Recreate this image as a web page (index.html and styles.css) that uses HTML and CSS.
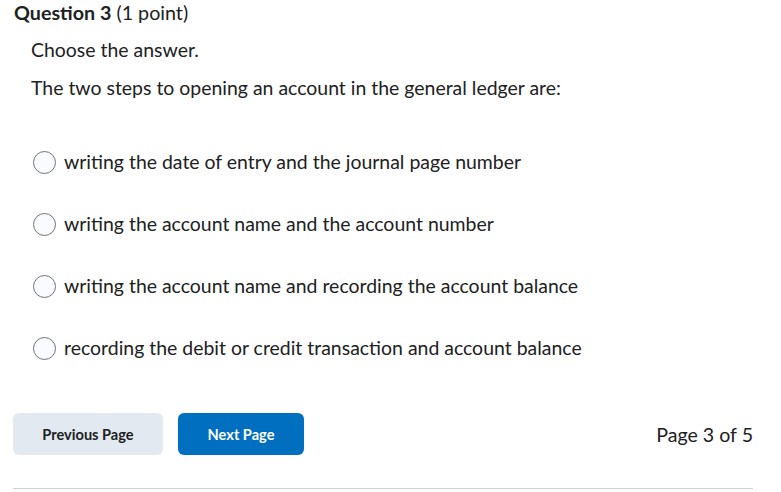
FILE: index.html
```html
<!DOCTYPE html>
<html>
<head>
<title>Question 3</title>
<link rel="stylesheet" href="styles.css">
</head>
<body>
<div class="quiz">
	<h2 class="qtitle"><b>Question 3</b> (1 point)</h2>
	<div class="qbody">
		<p class="instr">Choose the answer.</p>
		<p class="stem">The two steps to opening an account in the general ledger are:</p>
		<form class="choices">
			<label class="choice"><input type="radio" name="q3"/><span>writing the date of entry and the journal page number</span></label>
			<label class="choice"><input type="radio" name="q3"/><span>writing the account name and the account number</span></label>
			<label class="choice"><input type="radio" name="q3"/><span>writing the account name and recording the account balance</span></label>
			<label class="choice"><input type="radio" name="q3"/><span>recording the debit or credit transaction and account balance</span></label>
		</form>
	</div>
	<div class="nav">
		<button class="btn prev">Previous Page</button>
		<button class="btn next">Next Page</button>
		<div class="pageno">Page 3 of 5</div>
	</div>
	<div class="rule"></div>
</div>
</body>
</html>
```
FILE: styles.css
```css
html,body{
	margin:0;
	padding:0;
	background:#ffffff;
	font-family:"Lato","Noto Sans",sans-serif;
	color:#202122;
}
.quiz{
	width:740px;
	padding-left:13px;
}
.qtitle{
	margin:0;
	padding:2px 0 0 1px;
	font-size:19.7px;
	font-weight:400;
	line-height:22px;
}
.qtitle b{
	font-weight:700;
}
.qbody{
	padding-left:18px;
}
.instr, .stem{
	margin:0;
	font-size:19.45px;
	line-height:28px;
}
.instr{
	margin-top:12px;
}
.stem{
	margin-top:10px;
}
.choices{
	margin-top:46px;
	display:flex;
	flex-direction:column;
	gap:34px;
}
.choice{
	display:flex;
	align-items:center;
	gap:8px;
	font-size:19.45px;
	line-height:28px;
}
.choice input{
	appearance:none;
	-webkit-appearance:none;
	margin:0 0 0 2px;
	width:23px;
	height:23px;
	border:1px solid #6e7477;
	border-radius:50%;
	background:#f9fbff;
	box-sizing:border-box;
}
.nav{
	margin-top:51px;
	display:flex;
	align-items:center;
	gap:15px;
}
.btn{
	height:42px;
	border:none;
	border-radius:6px;
	font-family:"Lato","Noto Sans",sans-serif;
	font-size:14.6px;
	font-weight:700;
	padding:0;
}
.prev{
	width:150px;
	background:#e3e9f1;
	color:#202122;
}
.next{
	width:126px;
	background:#006fbf;
	color:#ffffff;
}
.pageno{
	margin-left:auto;
	font-size:19.6px;
}
.rule{
	margin-top:33px;
	height:1px;
	background:#cdd5dc;
}
```
